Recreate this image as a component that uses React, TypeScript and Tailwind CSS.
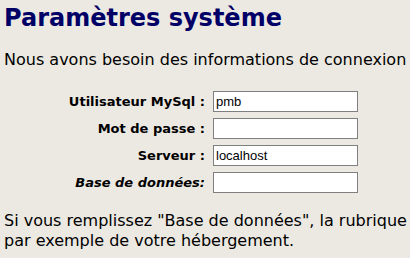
export default function App() {
  const rows = [
    { label: "Utilisateur MySql :", value: "pmb", italic: false },
    { label: "Mot de passe :", value: "", italic: false },
    { label: "Serveur :", value: "localhost", italic: false },
    { label: "Base de données:", value: "", italic: true },
  ];

  return (
    <div className="w-[410px] h-[258px] overflow-hidden bg-[#ece9e2] text-black font-['Verdana','DejaVu_Sans',sans-serif] whitespace-nowrap">
      <h1 className="pl-1 pt-[3px] text-[24px] leading-[30px] font-bold text-[#000066]">
        Paramètres système
      </h1>
      <p className="pl-1 mt-[17px] text-[16px] leading-[20px]">
        Nous avons besoin des informations de connexion
      </p>
      <div className="mt-[21px] flex flex-col gap-[6px]">
        {rows.map((r) => (
          <div key={r.label} className="flex items-center">
            <div
              className={
                "w-[213px] pr-[8px] text-right text-[13px] font-bold " +
                (r.italic ? "italic" : "")
              }
            >
              {r.label}
            </div>
            <div className="w-[145px] h-[21px] bg-white border border-[#7f7f7f] px-[2px] text-[13px] leading-[19px] font-['Liberation_Sans',Arial,sans-serif]">
              {r.value}
            </div>
          </div>
        ))}
      </div>
      <p className="pl-1 mt-[18px] text-[16px] leading-[20px]">
        Si vous remplissez "Base de données", la rubrique
        <br />
        par exemple de votre hébergement.
      </p>
    </div>
  );
}
